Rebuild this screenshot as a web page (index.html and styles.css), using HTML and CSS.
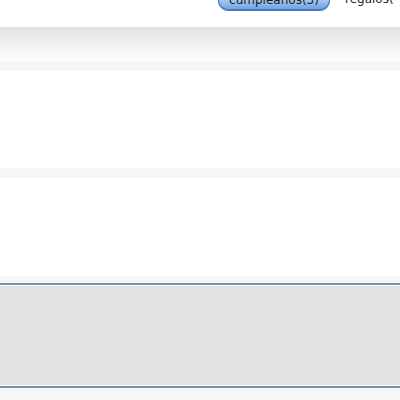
FILE: index.html
```html
<!DOCTYPE html>
<html>
<head>
<meta charset="utf-8">
<link rel="stylesheet" href="styles.css">
</head>
<body>
<div class="top">
  <div class="btn">cumpleaños(3)</div>
  <div class="link">regalos(</div>
</div>
<div class="grad"></div>
<div class="band b1"></div>
<div class="row r1"></div>
<div class="band b1"></div>
<div class="row r2"></div>
<div class="band b2"></div>
<div class="panel"><div class="inner"></div></div>
<div class="band b3"></div>
</body>
</html>
```
FILE: styles.css
```css
html, body { margin: 0; padding: 0; background: #fff; overflow: hidden; }
body { font-family: "DejaVu Sans", "Liberation Sans", sans-serif; width: 400px; height: 400px; }
.top { height: 27px; display: flex; align-items: flex-start; padding-left: 218px; overflow: hidden; }
.btn {
  margin-top: -12px; height: 21px; width: 110px; box-sizing: content-box;
  border: 1px solid #3d72bd; border-radius: 10px;
  background: linear-gradient(#d6e8fa 0%, #a8cbf0 50%, #6a9fe0 100%);
  box-shadow: inset 0 -1px 0 #4a80c8;
  font-size: 12px; line-height: 22px; text-align: center; color: #1a1a1a;
}
.link { margin-left: 15px; margin-top: -12px; font-size: 12px; line-height: 22px; color: #222; }
.grad { height: 34px; background: linear-gradient(#e2e2e2, #f2f2f2 55%, #fdfdfd); }
.band { background: #f5f6f8; }
.b1 { height: 10px; }
.b2 { height: 7px; }
.b3 { height: 12px; }
.row { background: #fff; }
.r1 { height: 97px; }
.r2 { height: 98px; }
.panel { border-top: 2px solid #7f8fb4; border-bottom: 2px solid #7f8fb4; }
.inner { height: 99px; border-top: 1px solid #fff; border-bottom: 1px solid #fff; background: #e3e3e3; }
```
